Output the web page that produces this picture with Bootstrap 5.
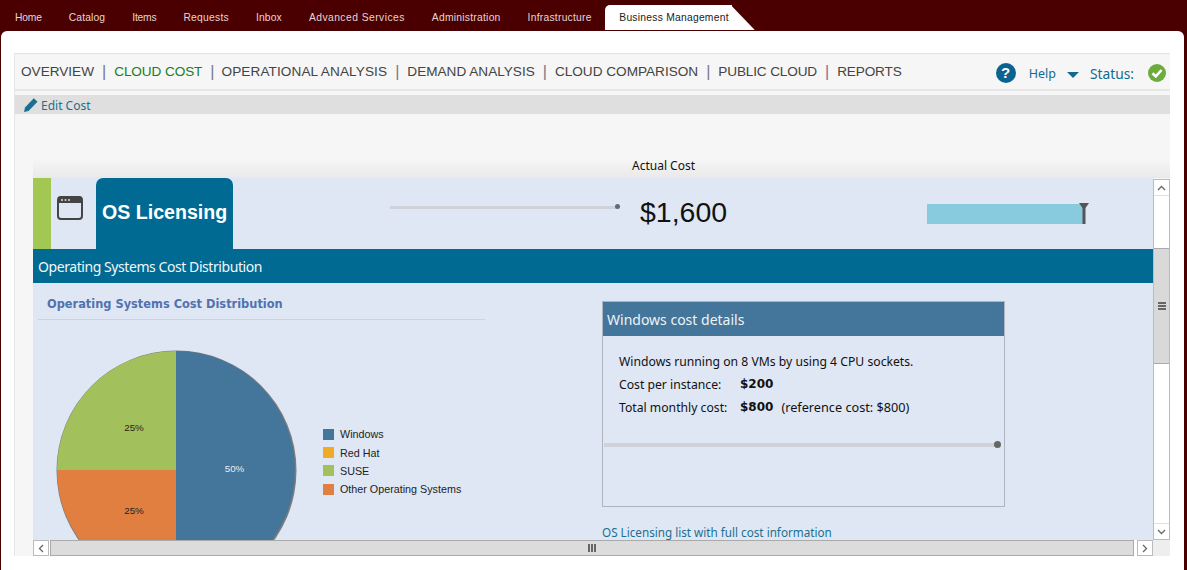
<!DOCTYPE html>
<html>
<head>
  <meta charset="UTF-8">
  <title>Business Management</title>
  <link rel="stylesheet" href="https://cdn.jsdelivr.net/npm/bootstrap@5.3.0/dist/css/bootstrap.min.css">
  <style>
    body { background: #4a0000; height: 570px; overflow: hidden; font-family: "Noto Sans", "Liberation Sans", sans-serif; color: #111; }
    a { text-decoration: none; }

    /* top tabs */
    .top-tabs { height: 31px; padding-left: 1.5px; padding-top: 5px; font: 10.3px "Liberation Sans", Arial, sans-serif; letter-spacing: .15px; }
    .top-tab { padding: 7px 13.5px 0; color: #e6d5d5; white-space: nowrap; }
    .tab-tight { letter-spacing: -.2px; }
    .tab-mid { letter-spacing: .25px; }
    .tab-wide { letter-spacing: .46px; }
    .top-tab-on { position: relative; padding: 7px 3px 0 14px; background: #fff; color: #222; border-top-left-radius: 5px; height: 25px; letter-spacing: .25px; }
    .top-tab-on::after { content: ""; position: absolute; left: calc(100% - 1px); top: 0; background: #fff; clip-path: polygon(0 0, 100% 100%, 0 100%); width: 24px; height: 25px; }

    /* page sheet */
    .sheet { margin-left: 1px; width: 1183px; height: 539px; background: #fff; border-top-left-radius: 6px; border-top-right-radius: 6px; padding: 22px 14px 0 13px; }
    .inner-box { height: 503px; background: #f6f6f6; border-top: 1px solid #e2e2e2; border-left: 1px solid #e6e6e6; }
    .sub-nav { height: 37px; padding: 0 0 0 6px; border-bottom: 2px solid #e6e6e6; font: 13.6px "Liberation Sans", Arial, sans-serif; color: #444; }
    .sub-sep { color: #778; margin: 0 8px; font-size: 16px; }
    .sub-on { color: #1b7d1b; letter-spacing: -.1px; }
    .sub-long { letter-spacing: .1px; margin-left: -1px; }
    .sub-tight { letter-spacing: -.15px; }
    .help-box { font-family: "Noto Sans", sans-serif; font-size: 13.8px; color: #126b8e; margin-right: 4px; margin-top: 3px; }
    .help-icon { width: 20px; height: 20px; border-radius: 50%; background: #0b6391; color: #fff; font: bold 15px/20px "Liberation Sans", sans-serif; text-align: center; margin-right: 13px; }
    .help-word { font-size: 12.5px; }
    .caret-down { width: 0; height: 0; margin: 3px 11px 0; border-left: 6px solid transparent; border-right: 6px solid transparent; border-top: 6px solid #126b8e; }
    .status-check { margin-left: 14px; }
    .edit-bar { height: 19px; margin-top: 4px; background: #dfdfdf; padding: 2px 0 0 9px; font-size: 12px; color: #1b6f8f; }
    .edit-bar svg { margin: -2px 3px 0 0; }
    .actual-row { height: 64px; margin-left: 18px; padding: 0 0 3px 124px; font-size: 12px; background: linear-gradient(#f6f6f6 70%, #e9e9e9); }

    /* scroll frame */
    .scroll-frame { margin-left: 18px; height: 378px; }
    .view-area { height: 362px; width: 1120px; overflow: hidden; background: #dfe7f5; }
    .v-bar { width: 17px; height: 361px; margin-top: 1px; background: #fff; border: 1px solid #bbb; }
    .sb-btn { height: 16px; flex: none; background: #fff; color: #666; }
    .v-thumb { height: 116px; margin-top: 52px; background: #d9d9d9; border-top: 1px solid #aaa; border-bottom: 1px solid #aaa; margin-bottom: auto; }
    .h-bar { width: 1120px; height: 16px; background: #fff; }
    .h-thumb { flex: 1; background: #dcdcdc; border: 1px solid #aaa; margin: 0 3px 0 1px; }
    .h-btn { width: 16px; background: #fff; border: 1px solid #bbb; }
    .corner-box { width: 17px; height: 16px; background: #eee; }
    .grip-v { width: 2px; height: 8px; background: #666; }
    .grip-h { width: 8px; height: 2px; background: #666; }
    .grip-gap { gap: 1px; }

    /* content */
    .head-row { height: 71px; }
    .green-strip { width: 18px; background: #a2c853; }
    .os-tab { width: 137px; margin-left: 13px; background: #006a93; border-radius: 7px 7px 0 0; color: #fff; font: bold 19.6px "Liberation Sans", Arial, sans-serif; padding: 23px 0 0 6px; }
    .os-icon { margin: 17px 0 0 6px; }
    .slim-line { position: relative; height: 3px; background: #cfd3d9; }
    .slim-line::after { content: ""; position: absolute; right: -2px; top: -2px; width: 5px; height: 5px; border-radius: 50%; background: #5f6a75; }
    .top-line { width: 228px; margin: 28px 0 0 157px; }
    .big-cost { margin: 18px 0 0 22px; font: 28.5px "Liberation Sans", Arial, sans-serif; color: #111; }
    .cost-bar { position: relative; width: 157px; height: 20px; margin: 26px 0 0 199.5px; background: #88cbde; }
    .cost-mark { position: absolute; left: 152px; top: -1px; }
    .blue-band { height: 34px; background: #006a93; color: #f2f7fa; font-size: 14px; letter-spacing: -.43px; padding-left: 5px; }
    .left-col { width: 569px; position: relative; }
    .left-title { margin: 14px 0 0 5px; width: 447px; height: 23px; padding-left: 9px; border-bottom: 1px solid #cdd2db; font: bold 11.4px "DejaVu Sans", Verdana, sans-serif; color: #5272ad; }
    .pie-wrap { margin: 30px 0 0 23px; }
    .legend-box { position: absolute; left: 290px; top: 142px; font: 10.75px "Liberation Sans", Arial, sans-serif; color: #222; }
    .legend-row { height: 18.4px; }
    .swatch { width: 11px; height: 11px; margin-right: 6px; }
    .detail-box { width: 403px; height: 206px; margin-top: 18px; background: #dfe7f5; border: 1px solid #aeb5bf; }
    .detail-head { height: 34px; background: #44759a; color: #eef3f7; font-size: 14px; padding-left: 4px; }
    .detail-body { padding: 14px 16px 0; font-size: 12.2px; line-height: 23px; }
    .lbl-col { width: 121px; }
    .cost-num { font: bold 12px/23px "DejaVu Sans", Verdana, sans-serif; }
    .ref-note { font-size: 12.7px; }
    .detail-line { width: 392px; margin: 24px 0 0 1px; height: 4px; }
    .detail-line::after { top: -2px; right: -5px; width: 7px; height: 7px; background: #666; }
    .full-link { display: block; margin-top: 17px; font-size: 11.7px; color: #1b6f8f; }
  </style>
</head>
<body class="m-0">

<nav class="top-tabs d-flex">
  <a class="top-tab tab-tight" href="#">Home</a>
  <a class="top-tab" href="#">Catalog</a>
  <a class="top-tab tab-tight" href="#">Items</a>
  <a class="top-tab tab-mid" href="#">Requests</a>
  <a class="top-tab" href="#">Inbox</a>
  <a class="top-tab tab-wide" href="#">Advanced Services</a>
  <a class="top-tab tab-mid" href="#">Administration</a>
  <a class="top-tab tab-mid" href="#">Infrastructure</a>
  <a class="top-tab-on" href="#">Business Management</a>
</nav>

<div class="sheet">
  <div class="inner-box">

    <div class="sub-nav d-flex align-items-center">
      <span>OVERVIEW</span><span class="sub-sep">|</span>
      <span class="sub-on">CLOUD COST</span><span class="sub-sep">|</span>
      <span class="sub-long">OPERATIONAL ANALYSIS</span><span class="sub-sep">|</span>
      <span>DEMAND ANALYSIS</span><span class="sub-sep">|</span>
      <span>CLOUD COMPARISON</span><span class="sub-sep">|</span>
      <span class="sub-tight">PUBLIC CLOUD</span><span class="sub-sep">|</span>
      <span class="sub-tight">REPORTS</span>
      <div class="help-box ms-auto d-flex align-items-center">
        <div class="help-icon">?</div>
        <span class="help-word">Help</span>
        <div class="caret-down"></div>
        <span>Status:</span>
        <svg class="status-check" width="18" height="18" viewBox="0 0 18 18"><circle cx="9" cy="9" r="9" fill="#6cac3c"/><path d="M4.500 9.200 7.800 12.400 13.500 6" fill="none" stroke="#fff" stroke-width="2.600"/></svg>
      </div>
    </div>

    <div class="edit-bar d-flex align-items-center">
      <svg width="14" height="15" viewBox="0 0 14 15"><path d="M0 15 1 10.500 9.800 1.200 13.500 4.800 4.500 14Z" fill="#1b6f8f"/></svg>
      <span>Edit Cost</span>
    </div>

    <div class="actual-row d-flex align-items-end justify-content-center"><span>Actual Cost</span></div>

    <div class="scroll-frame">
      <div class="d-flex">
        <div class="view-area">
          <div class="head-row d-flex">
            <div class="green-strip"></div>
            <svg class="os-icon" width="26" height="26" viewBox="0 0 26 26"><rect x="1" y="2" width="24" height="22" rx="3" fill="none" stroke="#444" stroke-width="2"/><path d="M1 3.500a2 2 0 0 1 2-2h20a2 2 0 0 1 2 2V8H1Z" fill="#444"/><circle cx="5" cy="5" r="1" fill="#ddd"/><circle cx="8.500" cy="5" r="1" fill="#ddd"/><circle cx="12" cy="5" r="1" fill="#ddd"/></svg>
            <div class="os-tab">OS Licensing</div>
            <div class="slim-line top-line"></div>
            <div class="big-cost">$1,600</div>
            <div class="cost-bar">
              <svg class="cost-mark" width="10" height="21" viewBox="0 0 10 21"><path d="M0 0H10L6.500 5V21H3.500V5Z" fill="#555"/></svg>
            </div>
          </div>
          <div class="blue-band d-flex align-items-center">Operating Systems Cost Distribution</div>
          <div class="d-flex">
            <div class="left-col">
              <div class="left-title">Operating Systems Cost Distribution</div>
              <div class="pie-wrap">
                <svg width="244" height="244" viewBox="0 0 244 244">
                  <circle cx="120.500" cy="120.500" r="120" fill="#7c7c7c"/>
                  <path d="M120 120V1A119 119 0 0 1 120 239Z" fill="#44759a"/>
                  <path d="M120 120V1A119 119 0 0 0 1 120Z" fill="#a2c05c"/>
                  <path d="M120 120H1A119 119 0 0 0 120 239Z" fill="#e07f40"/>
                  <text x="178.500" y="122" font-family="Liberation Sans" font-size="9.750" fill="#e8eef3" text-anchor="middle">50%</text>
                  <text x="78" y="81" font-family="Liberation Sans" font-size="9.750" fill="#222" text-anchor="middle">25%</text>
                  <text x="78" y="164" font-family="Liberation Sans" font-size="9.750" fill="#222" text-anchor="middle">25%</text>
                </svg>
              </div>
              <div class="legend-box">
                <div class="legend-row d-flex align-items-center"><span class="swatch" style="background:#44759a"></span>Windows</div>
                <div class="legend-row d-flex align-items-center"><span class="swatch" style="background:#f0aa25"></span>Red Hat</div>
                <div class="legend-row d-flex align-items-center"><span class="swatch" style="background:#a2c05c"></span>SUSE</div>
                <div class="legend-row d-flex align-items-center"><span class="swatch" style="background:#e07f40"></span>Other Operating Systems</div>
              </div>
            </div>
            <div>
              <div class="detail-box">
                <div class="detail-head d-flex align-items-center">Windows cost details</div>
                <div class="detail-body">
                  <div>Windows running on 8 VMs by using 4 CPU sockets.</div>
                  <div class="d-flex"><span class="lbl-col">Cost per instance:</span><span class="cost-num">$200</span></div>
                  <div class="d-flex"><span class="lbl-col">Total monthly cost:</span><span class="cost-num">$800</span><span class="ms-2 ref-note">(reference cost: $800)</span></div>
                </div>
                <div class="slim-line detail-line"></div>
              </div>
              <a class="full-link" href="#">OS Licensing list with full cost information</a>
            </div>
          </div>
        </div>
        <div class="v-bar d-flex flex-column">
          <div class="sb-btn d-flex align-items-center justify-content-center border-bottom">
            <svg width="9" height="6" viewBox="0 0 9 6"><path d="M1 5 4.500 1.500 8 5" fill="none" stroke="#666" stroke-width="1.300"/></svg>
          </div>
          <div class="v-thumb d-flex align-items-center justify-content-center">
            <div class="d-flex flex-column grip-gap"><div class="grip-h"></div><div class="grip-h"></div><div class="grip-h"></div></div>
          </div>
          <div class="sb-btn d-flex align-items-center justify-content-center border-top">
            <svg width="9" height="6" viewBox="0 0 9 6"><path d="M1 1 4.500 4.500 8 1" fill="none" stroke="#666" stroke-width="1.300"/></svg>
          </div>
        </div>
      </div>
      <div class="d-flex">
        <div class="h-bar d-flex">
          <div class="h-btn d-flex align-items-center justify-content-center">
            <svg width="6" height="9" viewBox="0 0 6 9"><path d="M5 1 1.500 4.500 5 8" fill="none" stroke="#666" stroke-width="1.300"/></svg>
          </div>
          <div class="h-thumb d-flex align-items-center justify-content-center grip-gap">
            <div class="grip-v"></div><div class="grip-v"></div><div class="grip-v"></div>
          </div>
          <div class="h-btn d-flex align-items-center justify-content-center">
            <svg width="6" height="9" viewBox="0 0 6 9"><path d="M1 1 4.500 4.500 1 8" fill="none" stroke="#666" stroke-width="1.300"/></svg>
          </div>
        </div>
        <div class="corner-box"></div>
      </div>
    </div>

  </div>
</div>
</body>
</html>
